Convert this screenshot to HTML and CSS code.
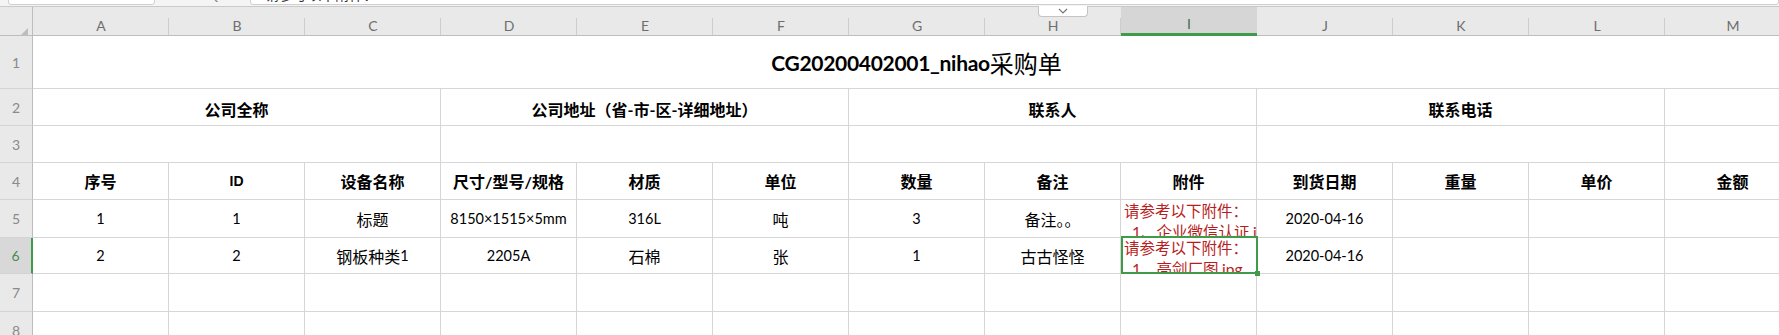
FILE: index.html
```html
<!DOCTYPE html>
<html lang="zh-CN">
<head>
    <meta charset="UTF-8">
    <title>CG20200402001_nihao采购单</title>
    <link rel="stylesheet" href="styles.css">
</head>
<body>
    <div class="app">
        <div class="toolbar">
            <div class="name-box">I6</div>
            <div class="fx-icons">Q ˅</div>
            <div class="formula-box">请参考以下附件：</div>
        </div>

        <div class="fold-tab">
            <svg width="10" height="6" viewBox="0 0 10 6"><path d="M1 1 L5 5 L9 1" fill="none" stroke="#777" stroke-width="1.2"/></svg>
        </div>

        <div class="sheet">
            <!-- column headers -->
            <div class="corner"><svg width="9" height="9" viewBox="0 0 9 9"><path d="M9 0 L9 9 L0 9 Z" fill="#bdbdbd"/></svg></div>
            <div class="col-head">A</div>
            <div class="col-head">B</div>
            <div class="col-head">C</div>
            <div class="col-head">D</div>
            <div class="col-head">E</div>
            <div class="col-head">F</div>
            <div class="col-head">G</div>
            <div class="col-head">H</div>
            <div class="col-head active">I</div>
            <div class="col-head">J</div>
            <div class="col-head">K</div>
            <div class="col-head">L</div>
            <div class="col-head">M</div>

            <!-- row 1 -->
            <div class="row-head">1</div>
            <div class="cell title span-13">CG20200402001_nihao<span class="cjk">采购单</span></div>

            <!-- row 2 -->
            <div class="row-head">2</div>
            <div class="cell head2 span-3">公司全称</div>
            <div class="cell head2 span-3">公司地址（省-市-区-详细地址）</div>
            <div class="cell head2 span-3">联系人</div>
            <div class="cell head2 span-3">联系电话</div>
            <div class="cell"></div>

            <!-- row 3 -->
            <div class="row-head">3</div>
            <div class="cell span-3"></div>
            <div class="cell span-3"></div>
            <div class="cell span-3"></div>
            <div class="cell span-3"></div>
            <div class="cell"></div>

            <!-- row 4 -->
            <div class="row-head">4</div>
            <div class="cell th">序号</div>
            <div class="cell th latin">ID</div>
            <div class="cell th">设备名称</div>
            <div class="cell th">尺寸/型号/规格</div>
            <div class="cell th">材质</div>
            <div class="cell th">单位</div>
            <div class="cell th">数量</div>
            <div class="cell th">备注</div>
            <div class="cell th">附件</div>
            <div class="cell th">到货日期</div>
            <div class="cell th">重量</div>
            <div class="cell th">单价</div>
            <div class="cell th">金额</div>

            <!-- row 5 -->
            <div class="row-head">5</div>
            <div class="cell num">1</div>
            <div class="cell num">1</div>
            <div class="cell txt">标题</div>
            <div class="cell num">8150×1515×5mm</div>
            <div class="cell num">316L</div>
            <div class="cell txt">吨</div>
            <div class="cell num">3</div>
            <div class="cell txt">备注。。</div>
            <div class="cell attach"><div class="note">请参考以下附件：<br>  1、企业微信认证.jpg</div></div>
            <div class="cell num">2020-04-16</div>
            <div class="cell"></div>
            <div class="cell"></div>
            <div class="cell"></div>

            <!-- row 6 -->
            <div class="row-head active">6</div>
            <div class="cell num">2</div>
            <div class="cell num">2</div>
            <div class="cell txt">钢板种类<span class="num-in">1</span></div>
            <div class="cell num">2205A</div>
            <div class="cell txt">石棉</div>
            <div class="cell txt">张</div>
            <div class="cell num">1</div>
            <div class="cell txt">古古怪怪</div>
            <div class="cell attach selected"><div class="note">请参考以下附件：<br>  1、亮剑厂图.jpg</div></div>
            <div class="cell num">2020-04-16</div>
            <div class="cell"></div>
            <div class="cell"></div>
            <div class="cell"></div>

            <!-- row 7 -->
            <div class="row-head">7</div>
            <div class="cell"></div><div class="cell"></div><div class="cell"></div><div class="cell"></div>
            <div class="cell"></div><div class="cell"></div><div class="cell"></div><div class="cell"></div>
            <div class="cell"></div><div class="cell"></div><div class="cell"></div><div class="cell"></div>
            <div class="cell"></div>

            <!-- row 8 -->
            <div class="row-head">8</div>
            <div class="cell"></div><div class="cell"></div><div class="cell"></div><div class="cell"></div>
            <div class="cell"></div><div class="cell"></div><div class="cell"></div><div class="cell"></div>
            <div class="cell"></div><div class="cell"></div><div class="cell"></div><div class="cell"></div>
            <div class="cell"></div>
        </div>
    </div>
</body>
</html>
```

FILE: styles.css
```css
body {
    margin: 0;
    background: #fff;
    font-family: Lato, "Noto Sans CJK SC", sans-serif;
    overflow: hidden;
}
.app {
    position: relative;
    width: 1779px;
    height: 335px;
    overflow: hidden;
}

/* formula bar, only its bottom edge shows */
.toolbar {
    height: 6px;
    background: #f4f4f4;
    border-bottom: 1px solid #c9c9c9;
    display: flex;
    align-items: flex-start;
    overflow: hidden;
}
.name-box {
    margin: -16px 0 0 8px;
    width: 145px;
    height: 19px;
    background: #fff;
    border: 1px solid #cfcfcf;
    border-radius: 3px;
    font-size: 14px;
    line-height: 19px;
    text-align: center;
    color: #333;
}
.fx-icons {
    margin: -13px 0 0 52px;
    font-size: 14px;
    line-height: 16px;
    color: #888;
}
.formula-box {
    margin: -16px 0 0 22px;
    flex: 1;
    height: 19px;
    background: #fff;
    border: 1px solid #cfcfcf;
    border-radius: 3px;
    padding-left: 14px;
    font-size: 14px;
    line-height: 19px;
    color: #333;
}
.fold-tab {
    position: absolute;
    left: 1038px;
    top: 6px;
    width: 48px;
    height: 10px;
    background: #fff;
    border: 1px solid #c4c4c4;
    border-top: none;
    border-radius: 0 0 4px 4px;
    display: flex;
    align-items: center;
    justify-content: center;
    z-index: 2;
}

/* grid */
.sheet {
    display: grid;
    width: 1801px;
    grid-template-columns: 33px repeat(13, 136px);
    grid-template-rows: 29px 53px 37px 37px 37px 38px 36px 38px 38px;
}
.sheet > div {
    box-sizing: border-box;
}
.corner {
    background: #e9e9e9;
    border-right: 1px solid #bdbdbd;
    border-bottom: 1px solid #bdbdbd;
    padding: 14px 0 0 19px;
}
.col-head {
    background: #e9e9e9 linear-gradient(#cdcdcd, #cdcdcd) right bottom / 1px 17px no-repeat;
    border-bottom: 1px solid #bdbdbd;
    color: #6e6e6e;
    font-size: 14px;
    display: flex;
    justify-content: center;
    align-items: center;
    padding-top: 8px;
}
.col-head.active {
    background: #d6d6d6;
    border-bottom: 3px solid #3f9a4a;
    color: #3d6e45;
    padding-top: 6px;
}
.row-head {
    background: #e9e9e9;
    border-right: 1px solid #bdbdbd;
    border-bottom: 1px solid #d3d3d3;
    color: #8a8a8a;
    font-size: 14px;
    display: flex;
    justify-content: center;
    align-items: center;
}
.row-head.active {
    background: #d8d8d8;
    border-right: 2px solid #3f9a4a;
    color: #4b8a55;
}
.cell {
    border-right: 1px solid #d6d6d6;
    border-bottom: 1px solid #d6d6d6;
    display: flex;
    justify-content: center;
    align-items: center;
    color: #000;
    white-space: nowrap;
}
.span-3 {
    grid-column: span 3;
}
.span-13 {
    grid-column: span 13;
}

.title {
    font-size: 21px;
    font-weight: 700;
    letter-spacing: -0.3px;
}
.title .cjk {
    font-size: 24px;
    font-weight: 400;
    letter-spacing: 0;
}
.head2 {
    font-size: 16px;
    font-weight: 700;
    padding-top: 3px;
}
.th {
    font-size: 16px;
    font-weight: 700;
}
.th.latin {
    font-family: "Liberation Sans", sans-serif;
    font-size: 14px;
}
.num {
    font-size: 14.5px;
}
.txt {
    font-size: 16px;
}
.num-in {
    font-size: 14.5px;
}

/* attachment cells, text overflows and is clipped */
.attach {
    position: relative;
    justify-content: flex-start;
    align-items: flex-start;
}
.note {
    width: 100%;
    height: 100%;
    overflow: hidden;
    padding: 1px 0 0 3px;
    box-sizing: border-box;
    color: #b81d1d;
    font-size: 15.5px;
    line-height: 21px;
    white-space: pre;
}
.selected .note {
    padding-top: 0;
}
.selected::after {
    content: "";
    position: absolute;
    top: -2px;
    left: 0;
    right: -2px;
    bottom: -1px;
    border: 2px solid #3f9a4a;
}
.selected::before {
    content: "";
    position: absolute;
    right: -4px;
    bottom: -3px;
    width: 5px;
    height: 5px;
    background: #3f9a4a;
    z-index: 1;
}
```
